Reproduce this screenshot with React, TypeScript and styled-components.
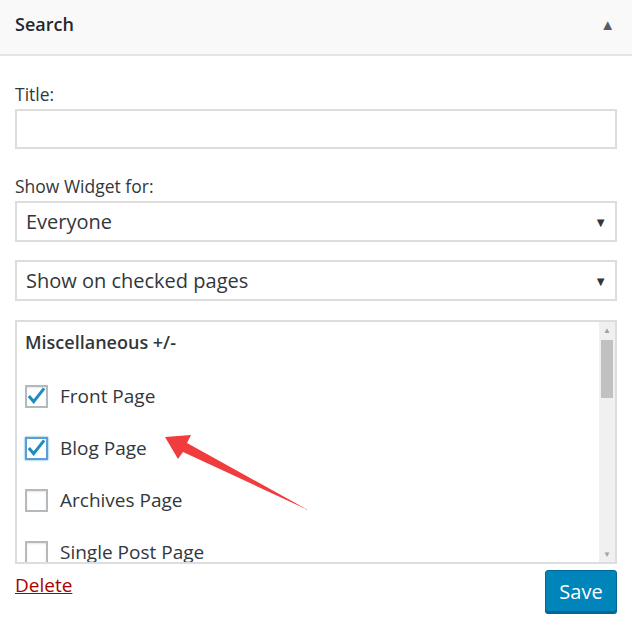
import React from "react";
import styled, { createGlobalStyle } from "styled-components";

const G = createGlobalStyle`
  body { margin: 0; background: #fff; font-family: "Open Sans", "Noto Sans", sans-serif; color: #32373c; }
`;
const Page = styled.div`width: 632px; height: 634px; position: relative; overflow: hidden;`;
const Header = styled.div`
  height: 56px; background: #f9f9f9; border-bottom: 2px solid #e5e5e5;
  display: flex; align-items: flex-start; justify-content: space-between; padding: 12px 15px 0 15px; box-sizing: border-box;
  font-size: 18px; font-weight: 600; color: #23282d;
`;
const Tri = styled.span`font-size: 15px; color: #555d66; margin-right: 2px; margin-top: 2px;`;
const Body = styled.div`padding: 26px 15px 0 15px; display: flex; flex-direction: column;`;
const Label = styled.div`font-size: 17.5px; margin-bottom: 3px; height: 24px;`;
const Input = styled.div`height: 36px; border: 2px solid #ddd; margin-bottom: 25px;`;
const Select = styled.div<{ mb: number }>`
  height: 37px; border: 2px solid #ddd; display: flex; align-items: center; justify-content: space-between;
  padding: 0 8px 0 9px; font-size: 20px; margin-bottom: ${p => p.mb}px;
`;
const List = styled.div`height: 240px; border: 2px solid #ddd; display: flex; overflow: hidden;`;
const ListInner = styled.div`flex: 1; padding: 8px 8px 0 8px; display: flex; flex-direction: column;`;
const Group = styled.div`font-size: 18px; font-weight: 600; height: 28px; margin-bottom: 30px;`;
const Row = styled.div`display: flex; align-items: center; gap: 12px; height: 24px; margin-bottom: 28px; font-size: 19px;`;
const Box = styled.span<{ focus?: boolean }>`
  width: 19px; height: 19px; border: 2px solid ${p => (p.focus ? "#5b9dd9" : "#b4b9be")};
  box-shadow: ${p => (p.focus ? "0 0 2px rgba(30,140,190,.8)" : "inset 0 1px 2px rgba(0,0,0,.1)")};
  display: flex; align-items: center; justify-content: center; flex: none;
`;
const Scroll = styled.div`width: 16px; background: #f0f0f0; display: flex; flex-direction: column; align-items: center;`;
const Thumb = styled.div`width: 12px; height: 58px; background: #c1c1c1; margin-top: 2px;`;
const Arr = styled.span`font-size: 8px; color: #a3a3a3; height: 16px; line-height: 16px;`;
const Footer = styled.div`display: flex; justify-content: space-between; align-items: flex-start; margin-top: 6px;`;
const Del = styled.a`color: #a00; text-decoration: underline; font-size: 19px; margin-top: 2px;`;
const Save = styled.button`
  width: 72px; height: 42px; background: #0085ba; border: 1px solid #006799; border-radius: 3px;
  box-shadow: 0 2px 0 #006799; color: #fff; font-size: 20px; font-family: inherit;
`;
const Overlay = styled.svg`position: absolute; left: 0; top: 0; pointer-events: none;`;

const Check = () => (
  <svg width="20" height="18" viewBox="0 0 20 18"><path d="M2 9 L7 15 L18 1" stroke="#1e8cbe" strokeWidth="3.2" fill="none" /></svg>
);

export default function App() {
  return (
    <Page>
      <G />
      <Header>Search<Tri>▲</Tri></Header>
      <Body>
        <Label>Title:</Label>
        <Input />
        <Label>Show Widget for:</Label>
        <Select mb={18}>Everyone<span style={{ fontSize: 13 }}>▼</span></Select>
        <Select mb={19}>Show on checked pages<span style={{ fontSize: 13 }}>▼</span></Select>
        <List>
          <ListInner>
            <Group>Miscellaneous +/-</Group>
            <Row><Box><Check /></Box>Front Page</Row>
            <Row><Box focus><Check /></Box>Blog Page</Row>
            <Row><Box />Archives Page</Row>
            <Row><Box />Single Post Page</Row>
          </ListInner>
          <Scroll><Arr>▲</Arr><Thumb /><div style={{ flex: 1 }} /><Arr>▼</Arr></Scroll>
        </List>
        <Footer><Del>Delete</Del><Save>Save</Save></Footer>
      </Body>
      <Overlay width="632" height="634">
        <path d="M308 510 L183 452 L178 459 L165 437 L191 435 L187 443 Z" fill="#f03c3c" />
      </Overlay>
    </Page>
  );
}
